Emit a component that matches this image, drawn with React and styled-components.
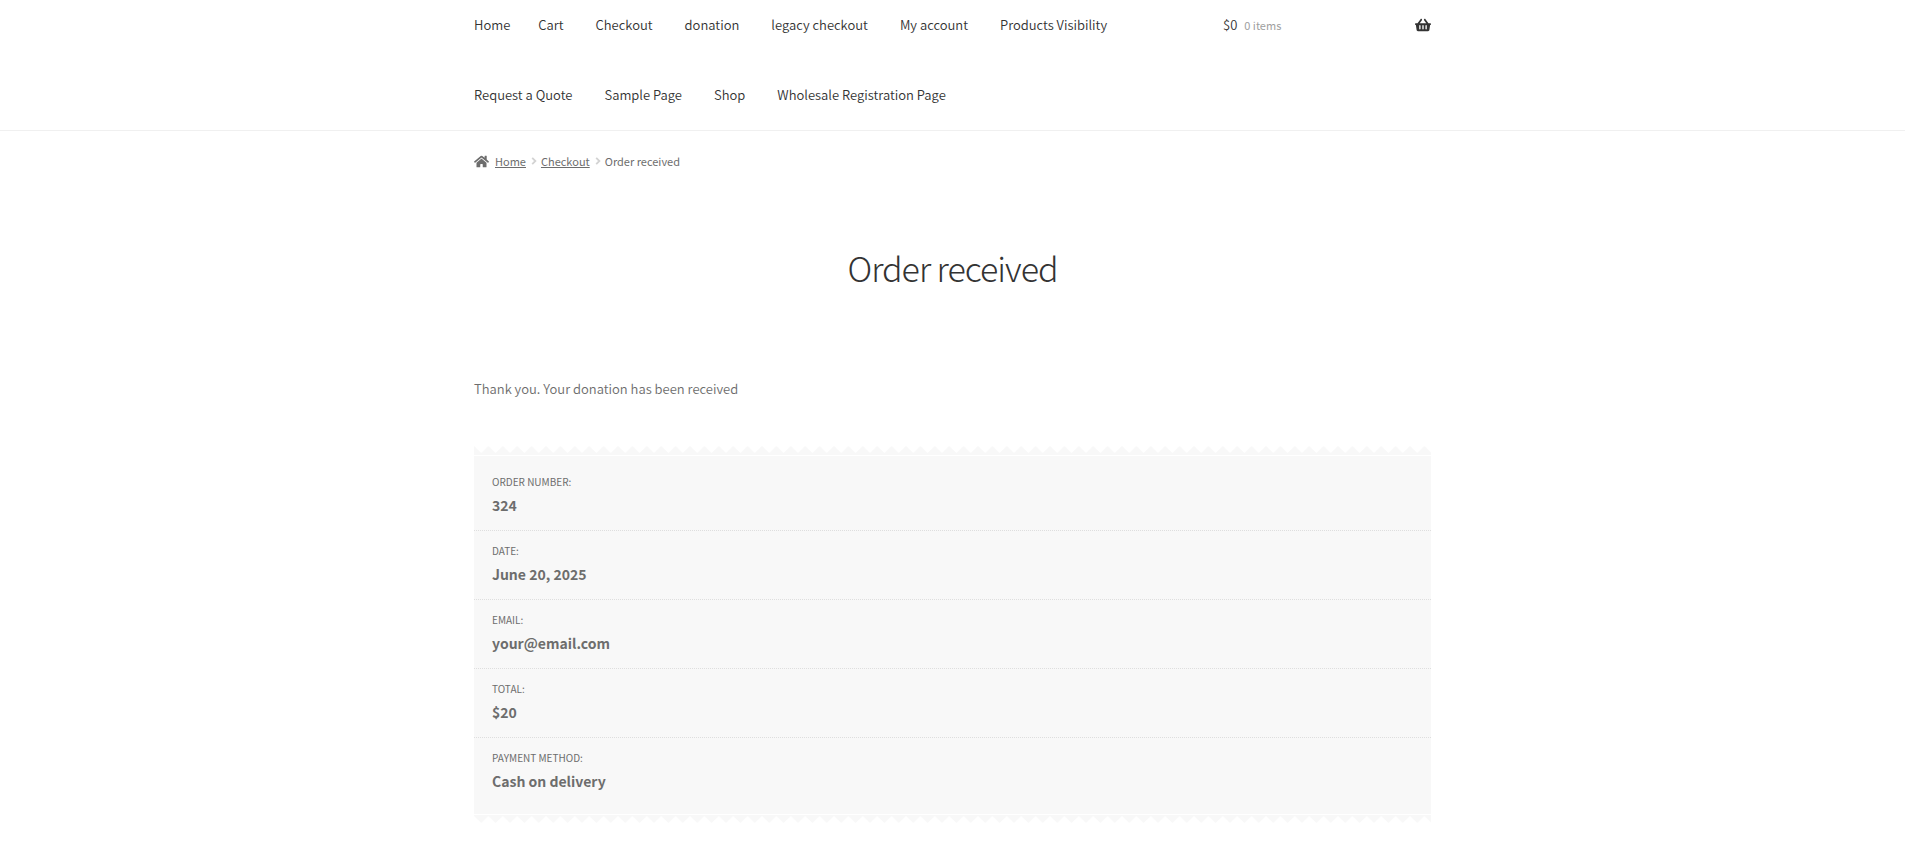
import React from "react";
import styled, { createGlobalStyle } from "styled-components";
import { FaHome, FaShoppingBasket } from "react-icons/fa";

const GlobalStyle = createGlobalStyle`
  *, *::before, *::after { box-sizing: border-box; }
  body {
    margin: 0;
    background: #fff;
    color: #6d6d6d;
    font-family: "Noto Sans CJK JP", "Source Sans Pro", sans-serif;
    font-size: 13px;
    font-weight: 350;
    line-height: 22px;
  }
`;

const Container = styled.div`
  width: 100%;
  max-width: 957px;
  margin: 0 auto;
`;

const Header = styled.header`
  border-bottom: 1px solid #f0f0f0;
`;

const HeaderRow = styled(Container)`
  display: flex;
  justify-content: space-between;
  align-items: flex-start;
`;

const Menu = styled.ul`
  flex: 0 1 72%;
  display: flex;
  flex-wrap: wrap;
  row-gap: 20px;
  margin: 0;
  padding: 0 0 10px;
  list-style: none;

  li { margin-right: 32px; }
  li:first-child { margin-right: 28px; }
`;

const MenuLink = styled.a`
  display: block;
  padding: 14px 0;
  color: #333;
  text-decoration: none;
`;

const CartLink = styled.a`
  flex: 0 0 208px;
  display: flex;
  align-items: center;
  gap: 7px;
  padding: 14px 0;
  color: #333;
  text-decoration: none;

  svg { margin-left: auto; }
`;

const CartCount = styled.span`
  color: #9e9e9e;
  font-size: 11px;
  font-weight: 400;
`;

const Breadcrumb = styled.nav`
  display: flex;
  align-items: center;
  padding: 19px 0 0;
  font-size: 11px;
  font-weight: 400;

  a { color: inherit; text-underline-offset: 1px; }
`;

const HomeIcon = styled(FaHome)`
  margin-right: 6px;
`;

const Chevron = styled.svg`
  margin: 0 4px 0 5px;
`;

const Title = styled.h1`
  margin: 74px 0 0;
  color: #333;
  font-size: 34px;
  font-weight: 200;
  line-height: 44px;
  letter-spacing: -1px;
  text-align: center;
`;

const Notice = styled.p`
  margin: 88px 0 46px;
`;

const Edge = styled.svg`
  display: block;
  width: 100%;
  height: 10px;
`;

const Details = styled.ul`
  margin: 0;
  padding: 6px 0 8px;
  background: #f8f8f8;
  list-style: none;
`;

const Detail = styled.li`
  padding: 13px 18px;
  font-size: 10px;
  font-weight: 400;
  line-height: 14px;
  text-transform: uppercase;

  & + & { border-top: 1px dotted #dedede; }
`;

const DetailValue = styled.strong`
  display: block;
  padding-top: 4px;
  font-size: 14px;
  font-weight: 600;
  line-height: 24px;
  text-transform: none;
`;

const pages = [
  "Home", "Cart", "Checkout", "donation", "legacy checkout", "My account",
  "Products Visibility", "Request a Quote", "Sample Page", "Shop",
  "Wholesale Registration Page",
];

const details = [
  ["Order number:", "324"],
  ["Date:", "June 20, 2025"],
  ["Email:", "your@email.com"],
  ["Total:", "$20"],
  ["Payment method:", "Cash on delivery"],
];

const Separator = () => (
  <Chevron width="6" height="8" viewBox="0 0 6 8" fill="none" stroke="#d3d3d3" strokeWidth="1.8" aria-hidden="true">
    <path d="M1.2 0.8 4.4 4 1.2 7.2" />
  </Chevron>
);

const ZigZag = ({ id, d }) => (
  <Edge aria-hidden="true">
    <defs>
      <pattern id={id} width="14.4" height="10" patternUnits="userSpaceOnUse">
        <path d={d} fill="#f8f8f8" />
      </pattern>
    </defs>
    <rect width="100%" height="10" fill={`url(#${id})`} />
  </Edge>
);

export default function App() {
  return (
    <>
      <GlobalStyle />
      <Header>
        <HeaderRow>
          <Menu>
            {pages.map((page) => (
              <li key={page}><MenuLink href="#">{page}</MenuLink></li>
            ))}
          </Menu>
          <CartLink href="#" title="View your shopping cart">
            <span>$0</span>
            <CartCount>0 items</CartCount>
            <FaShoppingBasket size={16} />
          </CartLink>
        </HeaderRow>
      </Header>
      <Container as="main">
        <Breadcrumb aria-label="Breadcrumb">
          <HomeIcon size={15} />
          <a href="#">Home</a>
          <Separator />
          <a href="#">Checkout</a>
          <Separator />
          <span>Order received</span>
        </Breadcrumb>
        <Title>Order received</Title>
        <Notice>Thank you. Your donation has been received</Notice>
        <ZigZag id="edge-top" d="M0 0 7.2 7 14.4 0V9H0Z" />
        <Details>
          {details.map(([label, value]) => (
            <Detail key={label}>
              {label}
              <DetailValue>{value}</DetailValue>
            </Detail>
          ))}
        </Details>
        <ZigZag id="edge-bottom" d="M0 1H14.4V2L7.2 9 0 2Z" />
      </Container>
    </>
  );
}
